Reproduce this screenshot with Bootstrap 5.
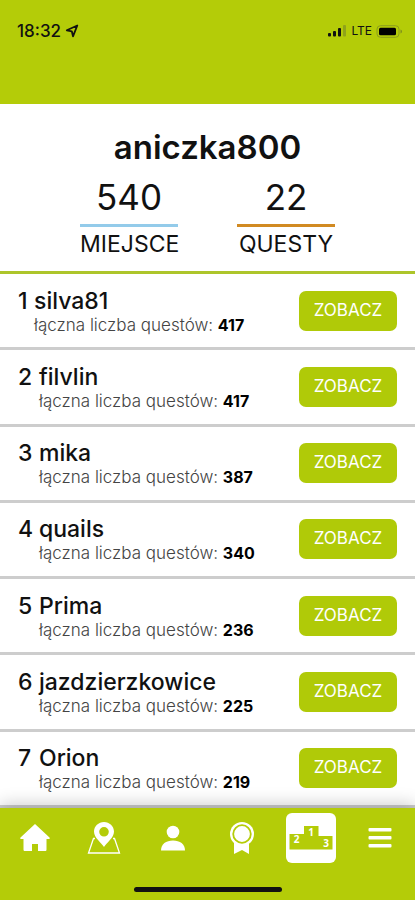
<!DOCTYPE html>
<html lang="pl">
<head>
<meta charset="utf-8">
<meta name="viewport" content="width=device-width, initial-scale=1">
<title>Ranking</title>
<link href="https://cdn.jsdelivr.net/npm/bootstrap@5.3.0/dist/css/bootstrap.min.css" rel="stylesheet">
<style>
  :root { --lime: #b4cc08; }
  body { font-family: Inter, "Noto Sans", sans-serif; color: #111; background: #fff; }
  .bg-lime { background: var(--lime); }
  .status-bar { height: 104px; padding: 20px 12px 0 17px; }
  .clock { font-size: 17px; line-height: 22px; font-weight: 500; }
  .carrier { font-size: 12px; line-height: 22px; }
  .profile { padding: 24px 80px 12px; border-bottom: 3px solid #adc52a; }
  .user-name { font-size: 33px; line-height: 38px; font-weight: 600; }
  .figure-value { font-size: 35px; line-height: 40px; padding: 3px 0 7px; border-bottom: 3px solid #93cbea; }
  .figure-value.orange { border-color: #d18a22; }
  .figure-label { font-size: 23px; line-height: 30px; padding-top: 2px; }
  .figure-box { width: 98px; }
  .entry { padding: 0 18px; border-bottom: 3px solid #cdcdcd; }
  .rank { width: 21px; }
  .entry:first-child .rank { width: 16px; }
  .entry-name { font-size: 23px; line-height: 28px; font-weight: 500; }
  .entry-info { font-size: 17px; line-height: 20px; font-weight: 300; color: #444; }
  .entry-info b { font-size: 16px; font-weight: 700; color: #000; }
  .btn-view { width: 98px; height: 40px; padding: 0 0 2px; border: 0; border-radius: 7px; background: #b0ca08; color: #fff; font-size: 17px; line-height: 24px; }
  .btn-view:hover { background: #9db506; color: #fff; }
  .tab-bar { height: 92px; box-shadow: 0 -4px 16px rgba(0,0,0,.2); padding: 5px 0 8px; }
  .tab-link { width: 50px; height: 50px; border-radius: 6px; }
  .tab-link.active { background: #fff; }
  .home-indicator { width: 148px; height: 5px; border-radius: 3px; background: #111; }
</style>
</head>
<body>
<div class="d-flex flex-column min-vh-100">
  <header class="status-bar bg-lime d-flex justify-content-between align-items-start">
    <div class="d-flex align-items-center gap-1">
      <span class="clock">18:32</span>
      <svg width="14" height="14" viewBox="0 0 14 14" fill="none" stroke="#111" stroke-width="1.8" stroke-linejoin="round" aria-hidden="true"><path d="M12.300 1.500 1.800 6.300 6.800 7.300 8 12.300z"/></svg>
    </div>
    <div class="d-flex align-items-center gap-1">
      <svg width="20" height="12" viewBox="0 0 20 12" aria-hidden="true"><g fill="#111"><rect x="1" y="8" width="3" height="3.500" rx="1"/><rect x="6" y="6" width="3" height="5.500" rx="1"/><rect x="11" y="3" width="3" height="8.500" rx="1"/></g><rect x="16" y="0" width="3" height="11.500" rx="1" fill="#8fa31a"/></svg>
      <span class="carrier">LTE</span>
      <svg width="27" height="13" viewBox="0 0 27 13" aria-hidden="true"><rect x="1" y=".7" width="22" height="11.600" rx="3.500" fill="none" stroke="#8a9d1c"/><rect x="3" y="2.700" width="17" height="7.600" rx="1.500" fill="#000"/><path d="M24.500 4.500v4c2-.8 2-3.200 0-4z" fill="#7e901c"/></svg>
    </div>
  </header>

  <section class="profile text-center">
    <h1 class="user-name mb-0">aniczka800</h1>
    <div class="d-flex justify-content-between mt-2">
      <div class="figure-box">
        <div class="figure-value">540</div>
        <div class="figure-label">MIEJSCE</div>
      </div>
      <div class="figure-box">
        <div class="figure-value orange">22</div>
        <div class="figure-label">QUESTY</div>
      </div>
    </div>
  </section>

  <main class="flex-fill d-flex flex-column">
    <article class="entry flex-fill d-flex align-items-center justify-content-between"><div class="d-flex"><div class="rank entry-name">1</div><div><div class="entry-name">silva81</div><div class="entry-info">łączna liczba questów: <b>417</b></div></div></div><button type="button" class="btn btn-view">ZOBACZ</button></article>
    <article class="entry flex-fill d-flex align-items-center justify-content-between"><div class="d-flex"><div class="rank entry-name">2</div><div><div class="entry-name">filvlin</div><div class="entry-info">łączna liczba questów: <b>417</b></div></div></div><button type="button" class="btn btn-view">ZOBACZ</button></article>
    <article class="entry flex-fill d-flex align-items-center justify-content-between"><div class="d-flex"><div class="rank entry-name">3</div><div><div class="entry-name">mika</div><div class="entry-info">łączna liczba questów: <b>387</b></div></div></div><button type="button" class="btn btn-view">ZOBACZ</button></article>
    <article class="entry flex-fill d-flex align-items-center justify-content-between"><div class="d-flex"><div class="rank entry-name">4</div><div><div class="entry-name">quails</div><div class="entry-info">łączna liczba questów: <b>340</b></div></div></div><button type="button" class="btn btn-view">ZOBACZ</button></article>
    <article class="entry flex-fill d-flex align-items-center justify-content-between"><div class="d-flex"><div class="rank entry-name">5</div><div><div class="entry-name">Prima</div><div class="entry-info">łączna liczba questów: <b>236</b></div></div></div><button type="button" class="btn btn-view">ZOBACZ</button></article>
    <article class="entry flex-fill d-flex align-items-center justify-content-between"><div class="d-flex"><div class="rank entry-name">6</div><div><div class="entry-name">jazdzierzkowice</div><div class="entry-info">łączna liczba questów: <b>225</b></div></div></div><button type="button" class="btn btn-view">ZOBACZ</button></article>
    <article class="entry flex-fill d-flex align-items-center justify-content-between"><div class="d-flex"><div class="rank entry-name">7</div><div><div class="entry-name">Orion</div><div class="entry-info">łączna liczba questów: <b>219</b></div></div></div><button type="button" class="btn btn-view">ZOBACZ</button></article>
  </main>

  <footer class="tab-bar bg-lime sticky-bottom d-flex flex-column justify-content-between align-items-center">
    <nav class="d-flex justify-content-around w-100" aria-label="Menu">
      <a href="#" class="tab-link d-flex align-items-center justify-content-center" aria-label="Start">
        <svg width="32" height="32" viewBox="0 0 32 32" fill="#fff"><path d="M16 2 1.500 15.500c-.6.800-.2 1.500.8 1.500H4.500v10.500c0 1 .5 1.500 1.500 1.500H13v-7h6v7h7c1 0 1.500-.5 1.500-1.500V17h2.200c1 0 1.400-.7.800-1.500z"/></svg>
      </a>
      <a href="#" class="tab-link d-flex align-items-center justify-content-center" aria-label="Mapa">
        <svg width="34" height="34" viewBox="0 0 34 34"><path d="M8 17.500H6.500L1.500 32h31l-5-14.500H26" fill="none" stroke="#fff" stroke-width="1.300"/><path fill="#fff" fill-rule="evenodd" d="M17 1C11.500 1 7 5.300 7 10.600c0 6.400 7 10.700 10 15.400 3-4.700 10-9 10-15.400C27 5.300 22.500 1 17 1zm0 5a4.800 4.800 0 1 1 0 9.600A4.800 4.800 0 0 1 17 6z"/></svg>
      </a>
      <a href="#" class="tab-link d-flex align-items-center justify-content-center" aria-label="Profil">
        <svg width="26" height="28" viewBox="0 0 26 28" fill="#fff"><circle cx="13" cy="8" r="6.300"/><path d="M1 26.500C1 20 6 16.500 13 16.500S25 20 25 26.500z"/></svg>
      </a>
      <a href="#" class="tab-link d-flex align-items-center justify-content-center" aria-label="Odznaki">
        <svg width="26" height="34" viewBox="0 0 26 34"><path d="M5 19v14l8-4 7 4V19z" fill="#fff"/><circle cx="13" cy="13" r="12" fill="#fff"/><circle cx="13" cy="13" r="8.800" fill="none" stroke="#b4cc08" stroke-width="1.800"/></svg>
      </a>
      <a href="#" class="tab-link active d-flex align-items-center justify-content-center" aria-label="Ranking" aria-current="page">
        <svg width="44" height="26" viewBox="0 0 44 26"><path d="M.5 9H15V1h14.500v10H43.500v13.500H.5z" fill="#b4cc08"/><g fill="#fff" font-family="Noto Sans, sans-serif" font-weight="700" font-size="10" text-anchor="middle"><text x="7.500" y="18">2</text><text x="22" y="10.500">1</text><text x="37" y="21.500">3</text></g></svg>
      </a>
      <a href="#" class="tab-link d-flex align-items-center justify-content-center" aria-label="Więcej">
        <svg width="24" height="22" viewBox="0 0 24 22" fill="#fff"><rect x=".5" y="1" width="23" height="3.500" rx="1"/><rect x=".5" y="9" width="23" height="3.500" rx="1"/><rect x=".5" y="17" width="23" height="3.500" rx="1"/></svg>
      </a>
    </nav>
    <div class="home-indicator"></div>
  </footer>
</div>
<script src="https://cdn.jsdelivr.net/npm/bootstrap@5.3.0/dist/js/bootstrap.bundle.min.js"></script>
</body>
</html>
